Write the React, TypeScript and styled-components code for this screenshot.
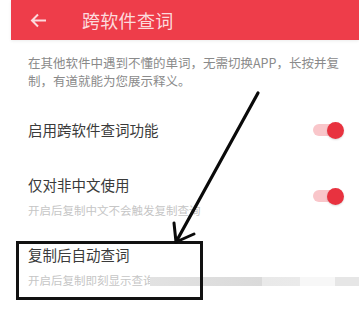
import React from 'react';
import styled, { createGlobalStyle } from 'styled-components';

const GlobalStyle = createGlobalStyle`
  html, body {
    margin: 0;
    padding: 0;
    background: #ffffff;
  }
  body {
    font-family: "Noto Sans CJK SC", "Noto Sans", sans-serif;
  }
`;

const Page = styled.div`
  position: relative;
  width: 359px;
  height: 312px;
  overflow: hidden;
  background: #ffffff;
`;

const Header = styled.header`
  margin-left: 11px;
  height: 40px;
  background: #ee3d4a;
  display: flex;
  align-items: center;
  padding-left: 19px;
  box-shadow: 0 1px 3px rgba(0, 0, 0, 0.08);
`;

const BackButton = styled.div`
  width: 17px;
  height: 17px;
  display: flex;
  align-items: center;
  justify-content: center;
`;

const Title = styled.h1`
  margin: 0 0 0 35px;
  font-size: 18px;
  font-weight: 400;
  color: #fcdadd;
  letter-spacing: 0.3px;
`;

const Content = styled.div`
  padding: 0 14px 0 28px;
`;

const Description = styled.p`
  margin: 14px 0 0 0;
  font-size: 12.5px;
  line-height: 18px;
  color: #8a8a8a;
`;

const Row = styled.div<{ $gap: number }>`
  margin-top: ${(p) => p.$gap}px;
  display: flex;
  align-items: center;
  justify-content: space-between;
`;

const RowText = styled.div`
  display: flex;
  flex-direction: column;
  gap: 6px;
`;

const RowTitle = styled.div`
  font-size: 14.5px;
  line-height: 22px;
  color: #3a3a3a;
`;

const RowHint = styled.div`
  font-size: 11.5px;
  line-height: 16px;
  color: #c6c6c6;
  white-space: nowrap;
`;

const Switch = styled.div`
  position: relative;
  width: 28px;
  height: 12px;
  margin-right: 4px;
  border-radius: 6px;
  background: #f9c6ca;
`;

const Knob = styled.div`
  position: absolute;
  right: -3px;
  top: 50%;
  width: 17px;
  height: 17px;
  margin-top: -8.5px;
  border-radius: 50%;
  background: #e8323f;
  box-shadow: 0 1px 2px rgba(0, 0, 0, 0.15);
`;

const Highlight = styled.div`
  position: absolute;
  left: 16px;
  top: 241px;
  width: 181px;
  height: 53px;
  border: 3px solid #111111;
`;

const Smudge = styled.div`
  position: absolute;
  left: 150px;
  top: 277px;
  width: 209px;
  height: 9px;
  background: linear-gradient(
    to right,
    #e2e2e2 0px,
    #dadada 112px,
    #e9e9e9 112px,
    #eaeaea 150px,
    #f7f7f7 150px,
    #f7f7f7 185px,
    #e6e6e6 185px
  );
`;

const Pointer = styled.svg`
  position: absolute;
  left: 0;
  top: 0;
  pointer-events: none;
`;

const Toggle = () => (
  <Switch>
    <Knob />
  </Switch>
);

export default function App() {
  return (
    <Page>
      <GlobalStyle />
      <Header>
        <BackButton>
          <svg width="17" height="15" viewBox="0 0 17 15" fill="none">
            <path d="M16 7.5H2M8 1.5L2 7.5L8 13.5" stroke="#fcdadd" strokeWidth="2" />
          </svg>
        </BackButton>
        <Title>跨软件查词</Title>
      </Header>
      <Content>
        <Description>
          在其他软件中遇到不懂的单词，无需切换APP，长按并复制，有道就能为您展示释义。
        </Description>
        <Row $gap={29}>
          <RowTitle>启用跨软件查词功能</RowTitle>
          <Toggle />
        </Row>
        <Row $gap={33}>
          <RowText>
            <RowTitle>仅对非中文使用</RowTitle>
            <RowHint>开启后复制中文不会触发复制查询</RowHint>
          </RowText>
          <Toggle />
        </Row>
        <Row $gap={26}>
          <RowText>
            <RowTitle>复制后自动查词</RowTitle>
            <RowHint>开启后复制即刻显示查询</RowHint>
          </RowText>
        </Row>
      </Content>
      <Smudge />
      <Highlight />
      <Pointer width="359" height="312" viewBox="0 0 359 312">
        <path d="M258 93L176 242" stroke="#0a0a0a" strokeWidth="3.2" strokeLinecap="round" />
        <path d="M174 223L176 242L194 234" stroke="#0a0a0a" strokeWidth="3" fill="none" strokeLinecap="round" strokeLinejoin="round" />
      </Pointer>
    </Page>
  );
}
